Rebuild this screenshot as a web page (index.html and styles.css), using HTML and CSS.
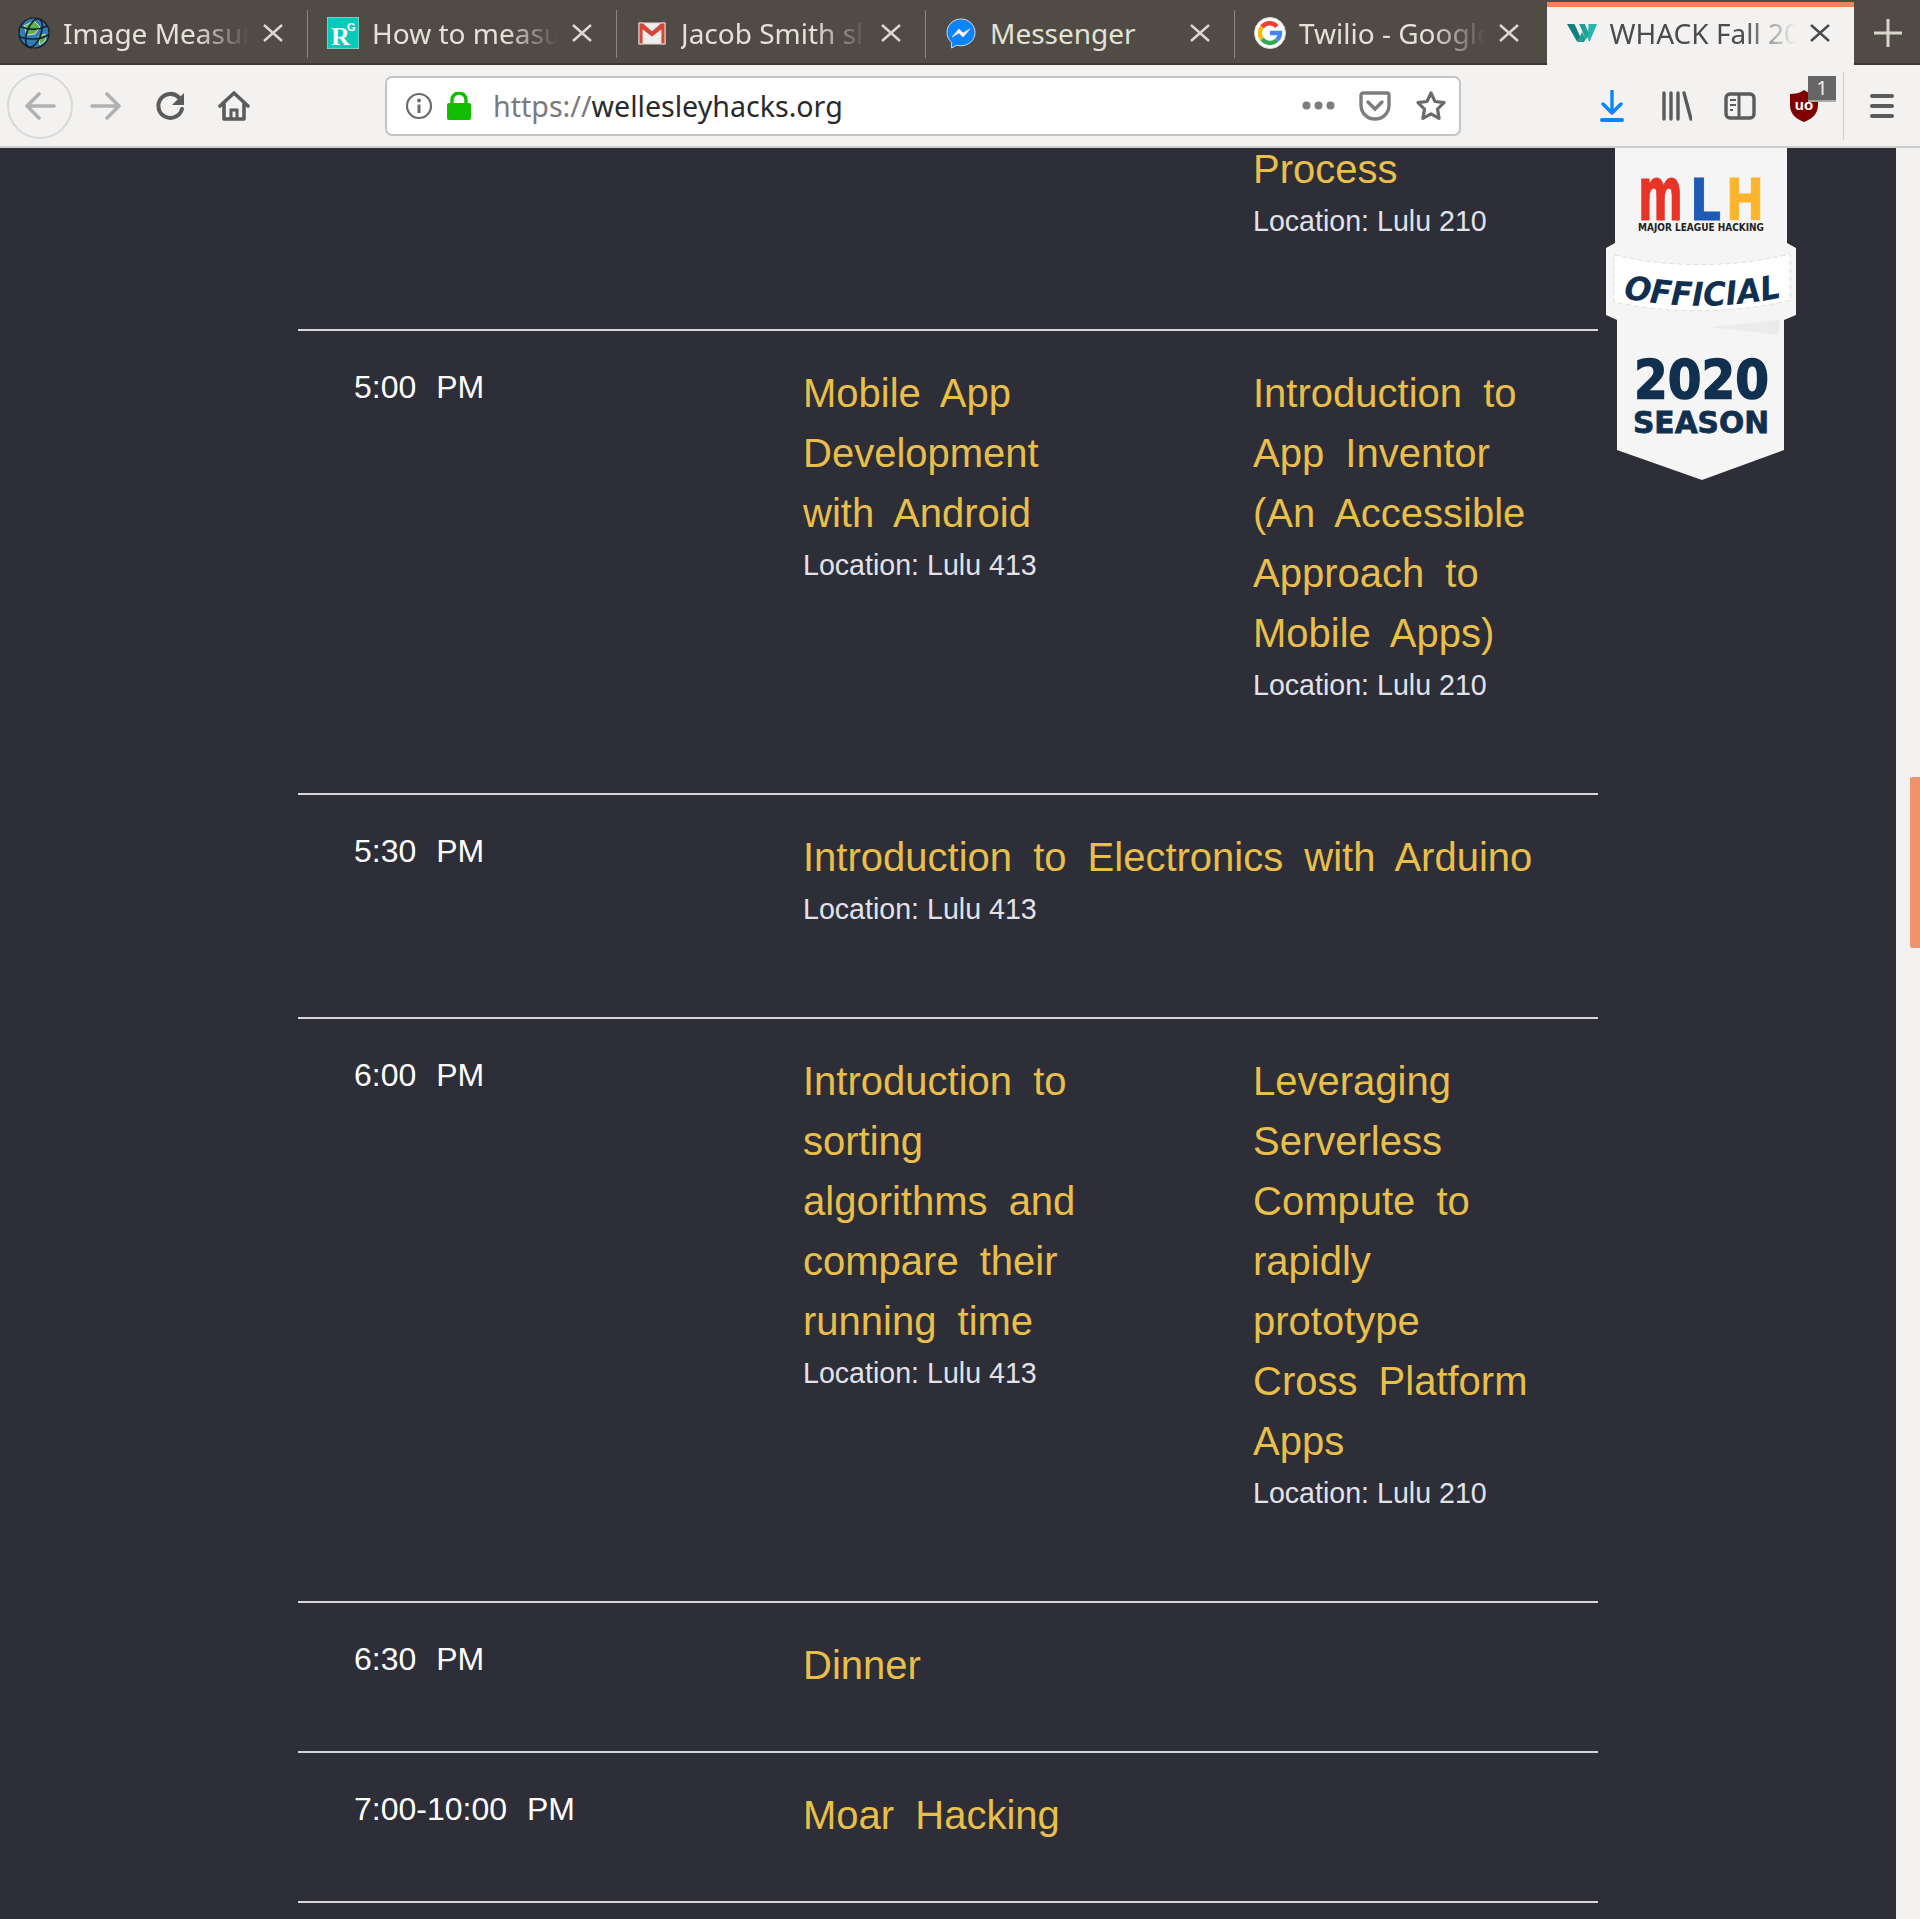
FILE: index.html
```html
<!DOCTYPE html>
<html lang="en">
<head>
<meta charset="utf-8">
<title>WHACK Fall 2019</title>
<link rel="stylesheet" href="styles.css">
</head>
<body>
<header class="chrome">
  <nav class="tabs">
    <div class="tab">
      <svg class="fav" viewBox="0 0 32 32"><circle cx="16" cy="16" r="15" fill="#2f7fb5"/><path d="M6 9 16 4l6 6-5 7-8 1zM20 20l7-3 1 6-6 5z" fill="#5cb548"/><g fill="none" stroke="#17212b" stroke-width="1.6"><circle cx="16" cy="16" r="15"/><ellipse cx="16" cy="16" rx="7" ry="15" transform="rotate(20 16 16)"/><path d="M3 10c8 3 18 3 26-1M2 20c8 3 20 3 28-2"/></g></svg>
      <span class="tab-title">Image Measur</span>
      <svg class="x" viewBox="0 0 20 18"><path d="m1 1 18 16M19 1 1 17"/></svg>
    </div>
    <div class="tab">
      <svg class="fav" viewBox="0 0 32 32"><rect width="32" height="32" rx="2" fill="#00ccbb"/><text x="4" y="28" class="rg-r">R</text><text x="20" y="14" class="rg-g">G</text></svg>
      <span class="tab-title">How to measu</span>
      <svg class="x" viewBox="0 0 20 18"><path d="m1 1 18 16M19 1 1 17"/></svg>
    </div>
    <div class="tab">
      <svg class="fav" viewBox="0 0 32 32"><rect x="3" y="6" width="26" height="21" fill="#eee"/><path d="M3 6h4l9 8 9-8h4v21h-4V13l-9 7-9-7v14H3z" fill="#d44638"/></svg>
      <span class="tab-title">Jacob Smith sl</span>
      <svg class="x" viewBox="0 0 20 18"><path d="m1 1 18 16M19 1 1 17"/></svg>
    </div>
    <div class="tab">
      <svg class="fav" viewBox="0 0 32 32"><path d="M16 2C8 2 2 8 2 15.500c0 4 1.700 7.600 4.600 10V31l5-2.800c1.400.4 2.900.6 4.400.6 8 0 14-6 14-13.300S24 2 16 2z" fill="#0a84ff"/><path d="m7 20 7-8 4 4 7-4-7 8-4-4z" fill="#fff"/></svg>
      <span class="tab-title tab-title-plain">Messenger</span>
      <svg class="x" viewBox="0 0 20 18"><path d="m1 1 18 16M19 1 1 17"/></svg>
    </div>
    <div class="tab">
      <svg class="fav" viewBox="0 0 32 32"><circle cx="16" cy="16" r="15.500" fill="#fff"/><g fill="none" stroke-width="4.500"><path d="M23 9.500A10 10 0 0 0 8 10" stroke="#ea4335"/><path d="M8 10a10 10 0 0 0 0 12" stroke="#fbbc05"/><path d="M8 22a10 10 0 0 0 15 1" stroke="#34a853"/><path d="M23 23a10 10 0 0 0 3-7H16" stroke="#4285f4"/></g></svg>
      <span class="tab-title">Twilio - Google</span>
      <svg class="x" viewBox="0 0 20 18"><path d="m1 1 18 16M19 1 1 17"/></svg>
    </div>
    <div class="tab tab-active">
      <svg class="fav fav-w" viewBox="0 0 32 20" preserveAspectRatio="none"><path d="M0 0h8l6 14-3 6z" fill="#12807f"/><path d="M11 20l5-11 4 8-2 3zM20 17 13 0h6l5 12z" fill="#1f9e9a"/><path d="M23 0h9l-8 20-2-4z" fill="#27b5ae"/></svg>
      <span class="tab-title">WHACK Fall 20</span>
      <svg class="x" viewBox="0 0 20 18"><path d="m1 1 18 16M19 1 1 17"/></svg>
    </div>
    <div class="new-tab">
      <svg viewBox="0 0 30 30"><path d="M15 1v28M1 15h28" stroke="#d8d5cd" stroke-width="3"/></svg>
    </div>
  </nav>
  <div class="toolbar">
    <div class="back">
      <svg class="ico ico-nav" viewBox="0 0 32 32"><path d="M30 16H3M15 4 3 16l12 12" fill="none" stroke="#b1b1b1" stroke-width="3.600" stroke-linecap="round" stroke-linejoin="round"/></svg>
    </div>
    <svg class="ico ico-forward" viewBox="0 0 32 32"><path d="M2 16h27M17 4l12 12-12 12" fill="none" stroke="#b1b1b1" stroke-width="3.600" stroke-linecap="round" stroke-linejoin="round"/></svg>
    <svg class="ico ico-reload" viewBox="0 0 32 32"><path d="M27 19A12 12 0 1 1 24 7.500" fill="none" stroke="#5b5b5b" stroke-width="4" stroke-linecap="round"/><path d="M29 3v12H17z" fill="#5b5b5b"/></svg>
    <svg class="ico ico-home" viewBox="0 0 32 32"><path d="M2 16 16 3l14 13M6 14v15h20V14" fill="none" stroke="#5b5b5b" stroke-width="3.600" stroke-linejoin="round" stroke-linecap="round"/><path d="M13 29V20h6v9" fill="none" stroke="#5b5b5b" stroke-width="3"/></svg>
    <div class="urlbar">
      <svg class="ico-info" viewBox="0 0 28 28"><circle cx="14" cy="14" r="12" fill="none" stroke="#6b6b6b" stroke-width="2.200"/><path d="M14 12.500V21" stroke="#6b6b6b" stroke-width="3"/><circle cx="14" cy="8.500" r="1.900" fill="#6b6b6b"/></svg>
      <svg class="ico-lock" viewBox="0 0 24 28"><path d="M5 12V8a7 7 0 0 1 14 0v4" fill="none" stroke="#12bc00" stroke-width="3.400"/><rect y="11" width="24" height="17" rx="2" fill="#12bc00"/></svg>
      <div class="url"><span class="url-dim">https://</span>wellesleyhacks.org</div>
      <svg class="ico-dots" viewBox="0 0 33 9"><g fill="#7d7d7d"><circle cx="4.500" cy="4.500" r="4"/><circle cx="16.500" cy="4.500" r="4"/><circle cx="28.500" cy="4.500" r="4"/></g></svg>
      <svg class="ico-pocket" viewBox="0 0 32 30"><path d="M4 2h24a2 2 0 0 1 2 2v10c0 8-6 14-14 14S2 22 2 14V4a2 2 0 0 1 2-2z" fill="none" stroke="#7d7d7d" stroke-width="3.400"/><path d="m9 11 7 7 7-7" fill="none" stroke="#7d7d7d" stroke-width="3.400" stroke-linecap="round"/></svg>
      <svg class="ico-star" viewBox="0 0 32 32"><path d="m16 3 4 8.500 9 1.200-6.500 6.400 1.600 9.200L16 23.900l-8.100 4.400 1.600-9.200L3 12.700l9-1.200z" fill="none" stroke="#6a6a6a" stroke-width="3.200" stroke-linejoin="round"/></svg>
    </div>
    <svg class="tool tool-download" viewBox="0 0 24 32"><path d="M12 1v22M3 14l9 9 9-9" fill="none" stroke="#0a84ff" stroke-width="3.400" stroke-linecap="round" stroke-linejoin="round"/><rect y="28" width="24" height="4" rx="2" fill="#0a84ff"/></svg>
    <svg class="tool tool-library" viewBox="0 0 30 30"><path d="M2 2v26M9 2v26M16 2v26M22 2l7 26" fill="none" stroke="#5b5b5b" stroke-width="3.400" stroke-linecap="round"/></svg>
    <svg class="tool tool-sidebar" viewBox="0 0 32 28"><rect x="2" y="2" width="28" height="24" rx="4" fill="none" stroke="#5b5b5b" stroke-width="3.400"/><path d="M15 2v24" stroke="#5b5b5b" stroke-width="3"/><path d="M6 8h6M6 13h6M6 18h3" stroke="#5b5b5b" stroke-width="2.200"/></svg>
    <div class="ublock">
      <svg class="ub-shield" viewBox="0 0 28 32"><path d="M14 0c4 3 9 4 14 4v11c0 9-6 14-14 17C6 29 0 24 0 15V4c5 0 10-1 14-4z" fill="#800000"/><text x="14" y="20" class="ub-text">uo</text></svg>
      <div class="ub-badge">1</div>
    </div>
    <div class="tool-sep"></div>
    <svg class="tool tool-menu" viewBox="0 0 24 26"><path d="M2 3h20M2 13h20M2 23h20" stroke="#5b5b5b" stroke-width="4" stroke-linecap="round"/></svg>
  </div>
</header>

<div class="page">
  <main class="content">
    <div class="schedule">
      <section class="row row-first">
        <div class="time"></div>
        <div class="event"></div>
        <div class="event">
          <div class="title">Process</div>
          <div class="loc">Location: Lulu 210</div>
        </div>
      </section>
      <section class="row">
        <div class="time">5:00 PM</div>
        <div class="event">
          <div class="title">Mobile App Development with Android</div>
          <div class="loc">Location: Lulu 413</div>
        </div>
        <div class="event">
          <div class="title">Introduction to App Inventor (An Accessible Approach to Mobile Apps)</div>
          <div class="loc">Location: Lulu 210</div>
        </div>
      </section>
      <section class="row">
        <div class="time">5:30 PM</div>
        <div class="event event-wide">
          <div class="title title-wide">Introduction to Electronics with Arduino</div>
          <div class="loc">Location: Lulu 413</div>
        </div>
      </section>
      <section class="row">
        <div class="time">6:00 PM</div>
        <div class="event">
          <div class="title">Introduction to sorting algorithms and compare their running time</div>
          <div class="loc">Location: Lulu 413</div>
        </div>
        <div class="event">
          <div class="title">Leveraging Serverless Compute to rapidly prototype Cross Platform Apps</div>
          <div class="loc">Location: Lulu 210</div>
        </div>
      </section>
      <section class="row">
        <div class="time">6:30 PM</div>
        <div class="event event-wide"><div class="title title-wide">Dinner</div></div>
      </section>
      <section class="row">
        <div class="time">7:00-10:00 PM</div>
        <div class="event event-wide"><div class="title title-wide">Moar Hacking</div></div>
      </section>
      <section class="row row-end"></section>
    </div>
    <svg class="mlh-badge" viewBox="0 0 190 332">
      <path d="M9 0h172v95l9 5v67l-12 5v130l-82 30-85-30V172L0 167v-67l9-5z" fill="#f5f5f6"/>
      <path d="M8 107c55 13 120 13 176-1v46c-56 14-121 14-176 2z" fill="#fff" stroke="#d8d8d8" stroke-width=".8" stroke-dasharray="5 3"/>
      <path d="m104 179 70-7-2 15z" fill="#ebebec"/>
      <text x="32" y="72" class="mlh-m" textLength="45" lengthAdjust="spacingAndGlyphs">m</text>
      <text x="84" y="72" class="mlh-l" textLength="31" lengthAdjust="spacingAndGlyphs">L</text>
      <text x="120" y="72" class="mlh-h" textLength="38" lengthAdjust="spacingAndGlyphs">H</text>
      <text x="32" y="83" class="mlh-sub" textLength="126" lengthAdjust="spacingAndGlyphs">MAJOR LEAGUE HACKING</text>
      <path id="curve" d="M17 150Q97 166 177 149" fill="none"/>
      <text class="mlh-official"><textPath href="#curve" textLength="160" lengthAdjust="spacingAndGlyphs">OFFICIAL</textPath></text>
      <text x="28" y="250" class="mlh-year" textLength="135" lengthAdjust="spacingAndGlyphs">2020</text>
      <text x="27" y="285" class="mlh-season" textLength="136" lengthAdjust="spacingAndGlyphs">SEASON</text>
    </svg>
  </main>
  <aside class="scrollbar"><div class="thumb"></div></aside>
</div>
</body>
</html>
```
FILE: styles.css
```css
* { box-sizing: border-box; }
html, body { margin: 0; padding: 0; }
body {
  width: 1920px;
  height: 1919px;
  overflow: hidden;
  background: #2d2e38;
  font-family: "Liberation Sans", Arial, sans-serif;
}

/* browser chrome */
.chrome { height: 148px; font-family: "Noto Sans", sans-serif; }
.tabs {
  display: flex;
  height: 65px;
  background: #504c45;
  border-bottom: 2px solid #3a3732;
}
.tab {
  width: 309px;
  height: 63px;
  display: flex;
  align-items: center;
  padding: 2px 0 0 18px;
  position: relative;
  color: #e4e1d9;
  stroke: #dcd9d1;
}
.tab:not(.tab-active):not(:nth-child(5))::after {
  content: "";
  position: absolute;
  right: 1px;
  top: 10px;
  height: 48px;
  width: 1px;
  background: #8b8880;
}
.tab-active {
  height: 65px;
  width: 307px;
  margin-top: 2px;
  padding: 0 0 8px 20px;
  background: #f3f2f0;
  border-top: 5px solid #ee8355;
  color: #4a4a4f;
  stroke: #4a4a4f;
}
.tab:nth-child(5) { width: 310.500px; }
.fav { width: 32px; height: 32px; flex: none; }
.fav-w { width: 30px; height: 18px; stroke: none; }
.rg-r { font: 700 26px "Liberation Serif", serif; fill: #fff; stroke: none; }
.rg-g { font: 700 11px "Liberation Sans", sans-serif; fill: #fff; stroke: none; }
.tab-title {
  width: 186px;
  margin-left: 13px;
  font-size: 28px;
  line-height: 40px;
  white-space: nowrap;
  stroke: none;
  -webkit-mask-image: linear-gradient(90deg, #000 72%, transparent 100%);
  mask-image: linear-gradient(90deg, #000 72%, transparent 100%);
}
.tab-title-plain { -webkit-mask-image: none; mask-image: none; }
.x { margin-left: 14px; width: 20px; height: 18px; flex: none; fill: none; stroke-width: 2.400; }
.new-tab { display: flex; align-items: center; padding: 3px 0 0 19px; }
.new-tab svg { width: 30px; height: 30px; }

.toolbar {
  height: 83px;
  display: flex;
  align-items: center;
  background: #f3f2f0;
  border-bottom: 2px solid #cdcdcd;
  padding: 0 0 0 7px;
}
.back {
  width: 66px;
  height: 66px;
  border: 2px solid #d8d8d8;
  border-radius: 50%;
  display: flex;
  align-items: center;
  justify-content: center;
  flex: none;
}
.ico { flex: none; width: 32px; height: 32px; }
.ico-forward { margin-left: 17px; }
.ico-reload { margin-left: 33px; }
.ico-home { margin-left: 31px; }
.urlbar {
  width: 1076px;
  height: 60px;
  margin-left: 135px;
  display: flex;
  align-items: center;
  flex: none;
  background: #fff;
  border: 2px solid #c4c4c4;
  border-radius: 7px;
  padding-left: 18px;
}
.ico-info { width: 28px; height: 28px; flex: none; }
.ico-lock { width: 24px; height: 28px; flex: none; margin-left: 14px; }
.url {
  width: 809px;
  margin-left: 22px;
  font-size: 28.600px;
  line-height: 40px;
  color: #2a2a2e;
  white-space: nowrap;
}
.url-dim { color: #7a7a7c; }
.ico-dots { width: 33px; height: 9px; flex: none; }
.ico-pocket { width: 32px; height: 30px; flex: none; margin-left: 24px; }
.ico-star { width: 32px; height: 32px; flex: none; margin-left: 24px; }
.tool { flex: none; }
.tool-download { width: 24px; height: 32px; margin-left: 139px; }
.tool-library { width: 30px; height: 30px; margin-left: 38px; }
.tool-sidebar { width: 32px; height: 28px; margin-left: 32px; }
.ublock { position: relative; width: 28px; height: 32px; margin-left: 34px; flex: none; }
.ub-shield { width: 28px; height: 32px; display: block; }
.ub-text { font: 700 15px "Liberation Sans", sans-serif; fill: #fff; text-anchor: middle; }
.ub-badge {
  position: absolute;
  left: 18px;
  top: -14px;
  width: 28px;
  height: 26px;
  background: #666;
  color: #eee;
  font: 20px/24px "Noto Sans", sans-serif;
  text-align: center;
  border-bottom: 2px solid #aaa;
}
.tool-sep { width: 1px; height: 68px; margin-left: 25px; background: #cfcfcf; flex: none; }
.tool-menu { width: 24px; height: 26px; margin-left: 26px; }

/* page */
.page { display: flex; height: 1771px; }
.content {
  position: relative;
  width: 1896px;
  height: 1771px;
  overflow: hidden;
}
.schedule { width: 1300px; margin: -9px 0 0 298px; }
.row {
  display: grid;
  grid-template-columns: 505px 450px 345px;
  padding: 32px 0 56px;
  border-top: 2px solid #d6d6da;
}
.row-first { border-top: 0; padding-top: 0; }
.row-end { padding: 0; }
.time {
  padding-left: 56px;
  font-size: 32px;
  line-height: 48px;
  word-spacing: 11px;
  color: #fff;
}
.event-wide { grid-column: 2 / 4; }
.title {
  max-width: 285px;
  font-size: 40px;
  line-height: 60px;
  word-spacing: 10px;
  color: #e8bf4a;
}
.title-wide { max-width: none; }
.loc {
  margin-bottom: 32px;
  padding-top: 1px;
  height: 42px;
  font-size: 28.600px;
  line-height: 42px;
  color: #e2e2e8;
}

.mlh-badge {
  position: absolute;
  left: 1606px;
  top: 0;
  width: 190px;
  height: 332px;
}
.mlh-m { font: 700 75px "DejaVu Sans", sans-serif; fill: #e73427; stroke: #e73427; }
.mlh-l { font: 700 57px "DejaVu Sans", sans-serif; fill: #1d5bb5; stroke: #1d5bb5; }
.mlh-h { font: 700 57px "DejaVu Sans", sans-serif; fill: #fbb42c; stroke: #fbb42c; }
.mlh-sub { font: 700 10.500px "DejaVu Sans", sans-serif; fill: #222; }
.mlh-official { font: italic 700 33px "DejaVu Sans", sans-serif; fill: #11304f; }
.mlh-year { font: 700 53px "DejaVu Sans", sans-serif; fill: #11304f; stroke: #11304f; stroke-width: 1.500; }
.mlh-season { font: 700 31px "DejaVu Sans", sans-serif; fill: #11304f; stroke: #11304f; stroke-width: .8; }

.scrollbar { width: 24px; background: #f2f1ef; flex: none; }
.thumb {
  width: 10px;
  height: 171px;
  margin: 629px 0 0 14px;
  background: #f0926b;
  border-radius: 2px 0 0 2px;
}
```
